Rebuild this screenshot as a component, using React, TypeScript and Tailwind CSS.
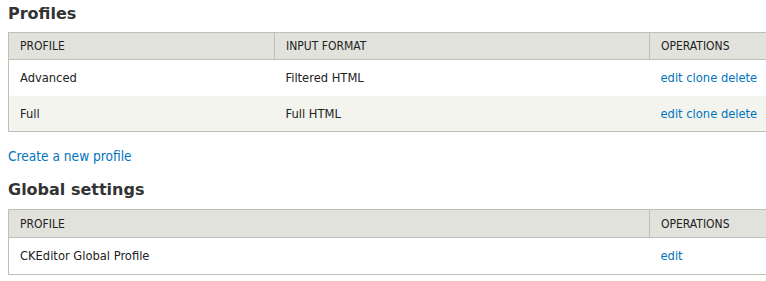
import React from "react";

const font = { fontFamily: '"DejaVu Sans Condensed", "DejaVu Sans", Verdana, sans-serif' };
const headFont = { fontFamily: '"DejaVu Sans", Verdana, sans-serif' };

function Th({ children, last, w, h }: { children: React.ReactNode; last?: boolean; w?: string; h?: string }) {
  return (
    <th
      className={`${h ?? "h-[27px]"} px-[11px] text-left font-normal text-[12px] uppercase text-[#222] ${last ? "" : "border-r border-[#bebfb9]"} ${w ?? ""}`}
    >
      {children}
    </th>
  );
}

function Td({ children, h }: { children: React.ReactNode; h?: string }) {
  return <td className={`${h ?? "h-[36px]"} px-[11px] text-[12.8px] text-[#222]`}>{children}</td>;
}

function Ops({ items }: { items: string[] }) {
  return (
    <span className="whitespace-nowrap">
      {items.map((i, k) => (
        <React.Fragment key={i}>
          {k > 0 ? " " : ""}
          <a className="text-[#0074bd]" href="#">
            {i}
          </a>
        </React.Fragment>
      ))}
    </span>
  );
}

export default function App() {
  return (
    <div className="w-[766px] h-[281px] overflow-hidden bg-white" style={font}>
      <div className="pl-[8px] w-[800px]">
        <h2 className="pt-[4px] text-[16px] font-bold text-[#333] leading-[20px]" style={headFont}>
          Profiles
        </h2>
        <table className="mt-[8px] w-[780px] border-collapse border border-[#bebfb9]">
          <thead>
            <tr className="bg-[#e1e2dc] border-b border-[#bebfb9]">
              <Th w="w-[266px]">Profile</Th>
              <Th w="w-[375px]">Input format</Th>
              <Th last>Operations</Th>
            </tr>
          </thead>
          <tbody>
            <tr className="bg-white">
              <Td>Advanced</Td>
              <Td>Filtered HTML</Td>
              <Td>
                <Ops items={["edit", "clone", "delete"]} />
              </Td>
            </tr>
            <tr className="bg-[#f3f4ee]">
              <Td>Full</Td>
              <Td>Full HTML</Td>
              <Td>
                <Ops items={["edit", "clone", "delete"]} />
              </Td>
            </tr>
          </tbody>
        </table>
        <div className="mt-[16px] text-[13.6px] leading-[17px]">
          <a href="#" className="text-[#0074bd]">Create a new profile</a>
        </div>
        <h2 className="mt-[15px] text-[16px] font-bold text-[#333] leading-[20px]" style={headFont}>
          Global settings
        </h2>
        <table className="mt-[9px] w-[780px] border-collapse border border-[#bebfb9]">
          <thead>
            <tr className="bg-[#e1e2dc] border-b border-[#bebfb9]">
              <Th w="w-[641px]" h="h-[28px]">Profile</Th>
              <Th last h="h-[28px]">Operations</Th>
            </tr>
          </thead>
          <tbody>
            <tr className="bg-white">
              <Td h="h-[37px]">CKEditor Global Profile</Td>
              <Td h="h-[37px]">
                <Ops items={["edit"]} />
              </Td>
            </tr>
          </tbody>
        </table>
      </div>
    </div>
  );
}
